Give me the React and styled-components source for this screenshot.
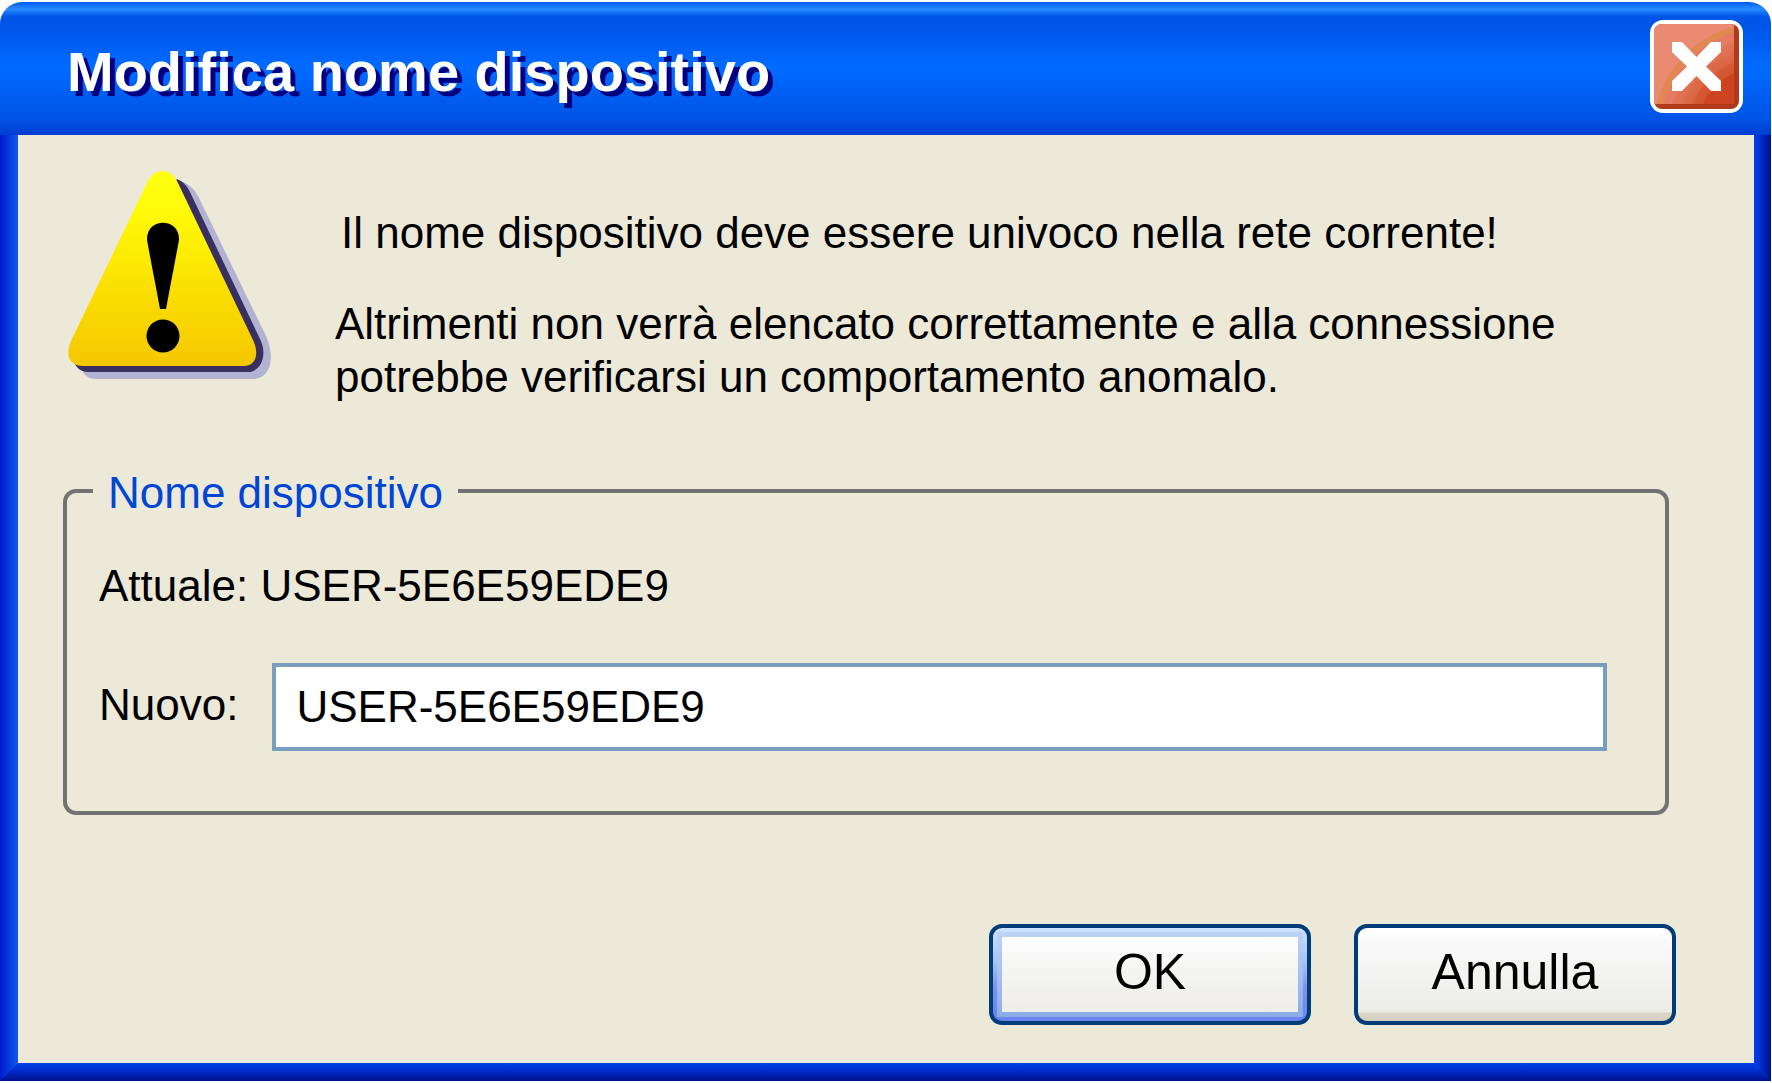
import React, { useId, useState } from "react";
import styled, { createGlobalStyle, css } from "styled-components";

const GlobalStyle = createGlobalStyle`
    * {
        box-sizing: border-box;
    }

    body {
        margin: 0;
        background-color: #ffffff;
    }
`;

const Window = styled.main`
    display: flex;
    flex-direction: column;
    min-height: 100vh;
    padding: 2px 1px 2px 0;
    color: #000000;
    font-family: "Liberation Sans", Arial, sans-serif;
    font-size: 44px;
    line-height: 52px;
`;

const TitleBar = styled.header`
    display: flex;
    justify-content: space-between;
    align-items: flex-start;
    height: 133px;
    padding: 18px 28px 0 67px;
    border-radius: 22px 22px 0 0;
    background: linear-gradient(
        to bottom,
        #0058ee 0,
        #0a68f4 2px,
        #2a8cff 7px,
        #1070f4 11px,
        #0054e6 15px,
        #0054e6 20px,
        #005cf2 40px,
        #0069ff 60px,
        #0069ff 72px,
        #005cf0 96px,
        #0054e6 116px,
        #0046d8 127px,
        #003dd0 133px
    );
`;

const Title = styled.h1`
    margin: 0;
    padding-top: 20px;
    color: #ffffff;
    font-size: 56px;
    font-weight: bold;
    line-height: 64px;
    text-shadow: 5px 5px 0 #000080;
`;

const CloseButton = styled.button`
    width: 93px;
    height: 93px;
    padding: 0;
    border: none;
    background: none;

    svg {
        display: block;
        width: 100%;
        height: 100%;
    }
`;

const Frame = styled.div`
    flex: 1;
    display: grid;
    grid-template-columns: 18px 1fr 17px;
    grid-template-rows: 1fr 18px;
`;

const LeftEdge = styled.div`
    grid-area: 1 / 1 / 3 / 2;
    background: linear-gradient(to right, #0019cf, #0f5be8);
`;

const RightEdge = styled.div`
    grid-area: 1 / 3 / 3 / 4;
    background: linear-gradient(to right, #0041ea, #0030d0 35%, #00108c);
`;

/* mitred where it meets the side edges */
const BottomEdge = styled.div`
    grid-area: 2 / 1 / 3 / 4;
    background: linear-gradient(to bottom, #0041ea, #0030d0 35%, #00108c);
    clip-path: polygon(18px 0, calc(100% - 17px) 0, 100% 100%, 0 100%);
`;

const Body = styled.form`
    grid-area: 1 / 2 / 2 / 3;
    display: flex;
    flex-direction: column;
    min-width: 0;
    padding: 36px 78px 38px 45px;
    background-color: #ece9d8;
`;

const Message = styled.section`
    display: flex;
    align-items: flex-start;
    gap: 63px;
    margin-bottom: 60px;
    padding-left: 5px;
`;

const WarningIcon = styled.svg`
    flex: none;
    width: 204px;
    height: 210px;
`;

const MessageText = styled.div`
    padding-top: 35px;
    line-height: 53px;
`;

const Notice = styled.p`
    margin: 0 0 38px;
    padding-left: 6px;
`;

const Detail = styled.p`
    margin: 0;
`;

const Group = styled.fieldset`
    min-width: 0;
    margin: 0 7px 0 0;
    padding: 41px 58px 60px 32px;
    border: 4px solid #727272;
    border-radius: 13px;
`;

const Legend = styled.legend`
    margin-left: -6px;
    padding: 4px 15px 0;
    color: #0046d5;
`;

const CurrentName = styled.p`
    margin: 0 0 51px;
`;

const Field = styled.div`
    display: flex;
    align-items: center;
    gap: 34px;
`;

const FieldLabel = styled.label`
    padding-bottom: 4px;
`;

const NameInput = styled.input`
    flex: 1;
    min-width: 0;
    height: 88px;
    padding: 0 20px;
    border: 4px solid #7a9ebe;
    border-radius: 0;
    outline: none;
    background-color: #ffffff;
    color: inherit;
    font: inherit;
`;

const Actions = styled.footer`
    display: flex;
    justify-content: flex-end;
    gap: 43px;
    margin-top: auto;
`;

const Button = styled.button`
    width: 322px;
    height: 101px;
    padding: 0 0 5px;
    border: 4px solid #003c78;
    border-radius: 13px;
    color: #000000;
    font-family: inherit;
    font-size: 50px;
    line-height: 58px;
    background: linear-gradient(
        to bottom,
        #ffffff 0,
        #fafafa 14px,
        #f4f4f3 40px,
        #eeefea 75px,
        #edece6 84px,
        #dcd7ca 85px,
        #d3ccbd 93px
    );

    ${({ $default }) =>
        $default &&
        css`
            background:
                linear-gradient(to bottom, #ffffff, #f4f4f3 45%, #eeede8) center / calc(100% - 18px) calc(100% - 18px) no-repeat,
                linear-gradient(to bottom, #bdd3f8, #9dbaf0 65%, #89ace4) center / calc(100% - 8px) calc(100% - 8px) no-repeat,
                linear-gradient(to bottom, #cee2ff, #a8c4f4 35%, #7a92ec 65%, #6982ee);
        `}
`;

function CloseIcon() {
    return (
        <svg viewBox="0 0 93 93" aria-hidden="true">
            <defs>
                <radialGradient id="closeShade" gradientUnits="userSpaceOnUse" cx="110" cy="110" r="107">
                    <stop offset="0.58" stopColor="#cc4420" />
                    <stop offset="0.59" stopColor="#d45430" />
                    <stop offset="0.67" stopColor="#d65a35" />
                    <stop offset="0.68" stopColor="#d96542" />
                    <stop offset="0.76" stopColor="#dc6c4b" />
                    <stop offset="0.77" stopColor="#e0704f" />
                    <stop offset="0.85" stopColor="#e27458" />
                    <stop offset="0.86" stopColor="#e57b62" />
                    <stop offset="0.93" stopColor="#e57b62" />
                    <stop offset="0.94" stopColor="#e28752" />
                    <stop offset="0.99" stopColor="#e28752" />
                    <stop offset="1" stopColor="#e98b73" />
                </radialGradient>
                <clipPath id="closeFace">
                    <rect x="4" y="4" width="85" height="85" rx="8" />
                </clipPath>
            </defs>
            <rect width="93" height="93" rx="13" fill="#ffffff" />
            <g clipPath="url(#closeFace)">
                <rect x="4" y="4" width="85" height="85" fill="#b2391c" />
                <rect x="4" y="4" width="80" height="80" fill="url(#closeShade)" />
            </g>
            <path
                d="M22 22H32L46.500 37L61 22H71V32L56 46.500L71 61V71H61L46.500 56L32 71H22V61L37 46.500L22 32Z"
                fill="#ffffff"
            />
        </svg>
    );
}

function Warning() {
    return (
        <WarningIcon viewBox="0 0 204 210" role="img" aria-label="Attenzione">
            <defs>
                <linearGradient id="warningFill" x1="0" y1="0" x2="0" y2="1">
                    <stop offset="0" stopColor="#ffff10" />
                    <stop offset="0.2" stopColor="#fffb08" />
                    <stop offset="0.7" stopColor="#f9d900" />
                    <stop offset="1" stopColor="#f5c800" />
                </linearGradient>
            </defs>
            <path
                d="M110 9C121 13 126 17 131 27L198 165C207 184 204 208 185 208H29C20 208 15 204 13 196Z"
                fill="#b2b2d2"
            />
            <path
                d="M109 8C116 11 119 15 122 21L192 168C200 184 193 201 180 201H20C13 201 9 197 7 193Z"
                fill="#393060"
            />
            <path
                d="M79 12C86 -4 103 -4 110 12L185 169C192 184 187 195 176 195H15C1 195 -3 184 3 170Z"
                fill="url(#warningFill)"
            />
            <path d="M79 69C78 46 112 46 111 69L98 138H92Z" />
            <circle cx="95" cy="165" r="16.500" />
        </WarningIcon>
    );
}

function App() {
    const [name, setName] = useState("USER-5E6E59EDE9");
    const inputId = useId();

    const handleSubmit = (e) => {
        e.preventDefault();
    };

    return (
        <>
            <GlobalStyle />
            <Window>
                <TitleBar>
                    <Title>Modifica nome dispositivo</Title>
                    <CloseButton type="button" aria-label="Chiudi">
                        <CloseIcon />
                    </CloseButton>
                </TitleBar>
                <Frame>
                    <LeftEdge />
                    <Body onSubmit={handleSubmit}>
                        <Message>
                            <Warning />
                            <MessageText>
                                <Notice>Il nome dispositivo deve essere univoco nella rete corrente!</Notice>
                                <Detail>
                                    Altrimenti non verrà elencato correttamente e alla connessione
                                    potrebbe verificarsi un comportamento anomalo.
                                </Detail>
                            </MessageText>
                        </Message>
                        <Group>
                            <Legend>Nome dispositivo</Legend>
                            <CurrentName>Attuale: USER-5E6E59EDE9</CurrentName>
                            <Field>
                                <FieldLabel htmlFor={inputId}>Nuovo:</FieldLabel>
                                <NameInput
                                    id={inputId}
                                    type="text"
                                    value={name}
                                    onChange={(e) => setName(e.target.value)}
                                />
                            </Field>
                        </Group>
                        <Actions>
                            <Button type="submit" $default>
                                OK
                            </Button>
                            <Button type="button">Annulla</Button>
                        </Actions>
                    </Body>
                    <RightEdge />
                    <BottomEdge />
                </Frame>
            </Window>
        </>
    );
}

export default App;
